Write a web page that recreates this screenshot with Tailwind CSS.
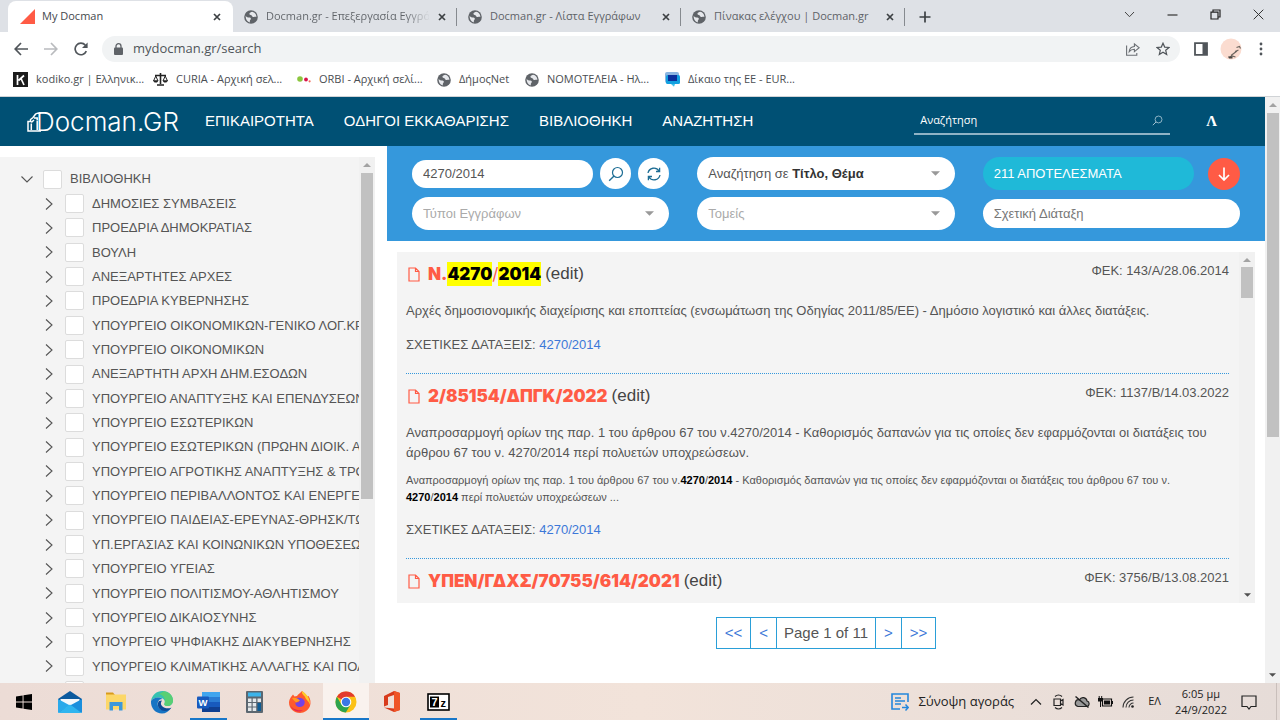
<!DOCTYPE html>
<html lang="el">
<head>
    <meta charset="UTF-8">
    <meta name="viewport" content="width=device-width, initial-scale=1.0">
    <title>My Docman</title>
    <script src="https://cdn.jsdelivr.net/npm/@tailwindcss/browser@4"></script>
</head>
<body class="h-screen flex flex-col overflow-hidden bg-white font-['Liberation_Sans',Arial,sans-serif] text-[#555]">

    <!-- Shared icons -->
    <svg class="hidden">
        <symbol id="globe" viewBox="0 0 14 14">
            <circle cx="7" cy="7" r="6.8" fill="#5f6368"/>
            <path d="M1.7 5.8C2.5 7.4 4 7.6 5.2 7.6 6.6 7.6 7.3 8.6 6.6 9.6 5.8 10.4 5.6 11.4 6 12.4 3.4 12 1.400 9.500 1.700 5.800ZM8.200 1.700C7 2.200 5.600 2.600 5.400 3.800 5.300 4.900 6.600 4.700 7.400 5.200 8.300 5.800 8 6.800 9.200 7 10.600 7.200 11.200 6.600 12.400 7 12.400 4 10.500 2.200 8.200 1.700Z" fill="#e6e8ec"/>
        </symbol>
        <symbol id="close" viewBox="0 0 8 8">
            <path d="M1 1 7 7M7 1 1 7" stroke="#3c4043" stroke-width="1.7" fill="none"/>
        </symbol>
        <symbol id="doc" viewBox="0 0 12 15">
            <path d="M1 1H7.5L11 4.5V14H1ZM7.5 1V4.5H11" stroke="#ff5b45" stroke-width="1.2" fill="none"/>
        </symbol>
        <symbol id="magnifier" viewBox="0 0 16 16">
            <circle cx="9.5" cy="6.5" r="5" stroke="currentColor" stroke-width="1.2" fill="none"/>
            <path d="M6 10 1.2 14.8" stroke="currentColor" stroke-width="1.4"/>
        </symbol>
        <symbol id="down" viewBox="0 0 10 5">
            <path d="M0 0H10L5 5Z" fill="currentColor"/>
        </symbol>
        <symbol id="up" viewBox="0 0 10 5">
            <path d="M0 5H10L5 0Z" fill="currentColor"/>
        </symbol>
    </svg>

    <!-- Browser tabs -->
    <div class="h-8 shrink-0 flex bg-[#dee1e6] pl-2 pt-px font-['Open_Sans','Noto_Sans',sans-serif] text-[11px] text-[#5f6368]">
        <div class="w-[225px] flex items-center bg-white rounded-t-lg pl-3 pr-3">
            <svg class="w-[15px] h-[15px]" viewBox="0 0 15 15"><path d="M15 0V15H0Z" fill="#ff5b45"/></svg>
            <span class="ml-[7px] flex-1 text-[#45494d]">My Docman</span>
            <button aria-label="Close tab"><svg class="w-2 h-2"><use href="#close"/></svg></button>
        </div>
        <div class="w-56 flex items-center pl-[11px]">
            <svg class="w-[14px] h-[14px] shrink-0"><use href="#globe"/></svg>
            <span class="ml-2 w-[164px] overflow-hidden whitespace-nowrap bg-linear-to-r from-[#5f6368] from-85% to-transparent bg-clip-text text-transparent">Docman.gr - Επεξεργασία Εγγράφου</span>
            <button class="ml-2" aria-label="Close tab"><svg class="w-2 h-2"><use href="#close"/></svg></button>
            <span class="ml-auto w-px h-[18px] bg-[#868a8f]"></span>
        </div>
        <div class="w-56 flex items-center pl-[11px]">
            <svg class="w-[14px] h-[14px] shrink-0"><use href="#globe"/></svg>
            <span class="ml-2 w-[164px] overflow-hidden whitespace-nowrap">Docman.gr - Λίστα Εγγράφων</span>
            <button class="ml-2" aria-label="Close tab"><svg class="w-2 h-2"><use href="#close"/></svg></button>
            <span class="ml-auto w-px h-[18px] bg-[#868a8f]"></span>
        </div>
        <div class="w-56 flex items-center pl-[11px]">
            <svg class="w-[14px] h-[14px] shrink-0"><use href="#globe"/></svg>
            <span class="ml-2 w-[164px] overflow-hidden whitespace-nowrap">Πίνακας ελέγχου | Docman.gr</span>
            <button class="ml-2" aria-label="Close tab"><svg class="w-2 h-2"><use href="#close"/></svg></button>
            <span class="ml-auto w-px h-[18px] bg-[#868a8f]"></span>
        </div>
        <button class="ml-[14px]" aria-label="New tab">
            <svg class="w-3 h-3" viewBox="0 0 12 12"><path d="M6 0.5V11.5M0.5 6H11.5" stroke="#3c4043" stroke-width="1.7"/></svg>
        </button>
        <div class="ml-auto flex items-center gap-8 pr-4 pb-[5px]">
            <button aria-label="Tab search"><svg class="w-[11px] h-[11px]" viewBox="0 0 11 11"><path d="M1 3 5.5 7.7 10 3" stroke="#444" fill="none"/></svg></button>
            <button aria-label="Minimize"><svg class="w-[11px] h-[11px]" viewBox="0 0 11 11"><path d="M0.5 6H10.5" stroke="#333" stroke-width="1.2"/></svg></button>
            <button aria-label="Restore"><svg class="w-[11px] h-[11px]" viewBox="0 0 11 11"><path d="M1 3.2H8V10H1ZM3 3V1H10V8H8" stroke="#222" stroke-width="1.2" fill="none"/></svg></button>
            <button aria-label="Close"><svg class="w-[11px] h-[11px]" viewBox="0 0 11 11"><path d="M0.7 0.7 10.3 10.3M10.3 0.7 0.7 10.3" stroke="#333" fill="none"/></svg></button>
        </div>
    </div>

    <!-- Address bar -->
    <div class="h-[34px] shrink-0 flex items-center pl-[14px] pr-3 font-['Open_Sans','Noto_Sans',sans-serif]">
        <button aria-label="Back"><svg class="w-[14px] h-[14px]" viewBox="0 0 14 14"><path d="M14 7H1.5M7 1 1.2 7 7 13" stroke="#50555a" stroke-width="1.7" fill="none"/></svg></button>
        <button class="ml-4" aria-label="Forward"><svg class="w-[14px] h-[14px]" viewBox="0 0 14 14"><path d="M0 7H12.5M7 1 12.8 7 7 13" stroke="#b9bbbe" stroke-width="1.7" fill="none"/></svg></button>
        <button class="ml-4" aria-label="Reload"><svg class="w-[14px] h-[14px]" viewBox="0 0 14 14"><path d="M12.3 9.2A5.8 5.8 0 1 1 11.3 3.1" stroke="#50555a" stroke-width="1.7" fill="none"/><path d="M13.6 0.4V6H8Z" fill="#50555a"/></svg></button>
        <div class="ml-[14px] flex-1 h-[26px] rounded-full bg-[#f1f3f4] flex items-center pl-3 pr-[10px]">
            <svg class="w-[9px] h-3" viewBox="0 0 9 12"><rect y="4.5" width="9" height="7.5" rx="1" fill="#5f6368"/><path d="M2 5V3.2A2.5 2.5 0 0 1 7 3.2V5" stroke="#5f6368" stroke-width="1.3" fill="none"/></svg>
            <label for="address" class="sr-only">Address</label>
            <input id="address" type="text" value="mydocman.gr/search" class="ml-[10px] flex-1 text-[13px] text-[#50555a] bg-transparent outline-none">
            <button aria-label="Share"><svg class="w-[14px] h-[14px]" viewBox="0 0 14 14"><path d="M0.6 3.5V13.2H10.8V11M3.2 9.6C3.5 6.4 5.2 4.7 8.4 4.5V1.8L13.2 5.8 8.4 9.6V7.2C6 7.2 4.5 7.9 3.2 9.6Z" stroke="#6b6f74" stroke-width="1.1" fill="none"/></svg></button>
            <button class="ml-4" aria-label="Bookmark"><svg class="w-[14px] h-[14px]" viewBox="0 0 14 14"><path d="M7 1.2 8.7 5.1 13 5.5 9.7 8.3 10.7 12.6 7 10.3 3.3 12.6 4.3 8.3 1 5.5 5.3 5.1Z" stroke="#50555a" stroke-width="1.2" fill="none"/></svg></button>
        </div>
        <button class="ml-[14px]" aria-label="Side panel"><svg class="w-[14px] h-[14px]" viewBox="0 0 14 14"><path d="M1 1.2H13V12.8H1Z" stroke="#50555a" stroke-width="1.8" fill="none"/><path d="M8.5 1H13V13H8.5Z" fill="#50555a"/></svg></button>
        <button class="ml-3" aria-label="Profile"><svg class="w-[22px] h-[22px]" viewBox="0 0 22 22"><circle cx="11" cy="11" r="10.5" fill="#fbdcd0"/><path d="M9 19.500 12 18 15.500 19M11 17.500 17 13M16.500 9.500 19.500 8.500 20.500 10.500M15 13.500 18.500 12" stroke="#6d655f" stroke-width="1.2" fill="none"/><path d="M8 18.500H12.500V20.500H9Z" fill="#4a4643"/></svg></button>
        <button class="ml-3" aria-label="Menu"><svg class="w-[14px] h-[14px]" viewBox="0 0 14 14"><g fill="#50555a"><circle cx="7" cy="2" r="1.4"/><circle cx="7" cy="7" r="1.4"/><circle cx="7" cy="12" r="1.4"/></g></svg></button>
    </div>

    <!-- Bookmarks -->
    <nav class="h-[31px] shrink-0 flex items-center pl-[13px] pb-[3px] border-b border-[#d0d3d6] font-['Open_Sans','Noto_Sans',sans-serif] text-[11px] text-[#4a4e52] whitespace-nowrap">
        <a href="#" class="w-[140px] flex items-center gap-2">
            <svg class="w-[15px] h-[15px]" viewBox="0 0 15 15"><rect width="15" height="15" fill="#1c1c1c"/><path d="M4.5 3V13M11 3.5 5.5 8.5M8 6.5 11 13" stroke="#fff" stroke-width="1.7" fill="none"/></svg>
            kodiko.gr | Ελληνικ...
        </a>
        <a href="#" class="w-[144px] flex items-center gap-2">
            <svg class="w-[15px] h-[15px]" viewBox="0 0 15 15"><path d="M7.5 1V12M2 3.5H13M4 13H11" stroke="#222" stroke-width="1.6"/><path d="M0.5 9 2.8 4 5 9ZM10 9 12.2 4 14.5 9Z" stroke="#222" fill="none"/><path d="M0.3 8.5H5.3L4 10.5H1.5ZM9.7 8.5H14.7L13.4 10.5H11Z" fill="#222"/></svg>
            CURIA - Αρχική σελ...
        </a>
        <a href="#" class="w-[140px] flex items-center gap-2">
            <svg class="w-[14px] h-[14px]" viewBox="0 0 14 14"><circle cx="3" cy="6" r="2.8" fill="#8cc63f"/><circle cx="9" cy="6.5" r="1.9" fill="#d8124a"/><circle cx="12.6" cy="8.3" r="1.1" fill="#f2705e"/></svg>
            ORBI - Αρχική σελί...
        </a>
        <a href="#" class="w-[88px] flex items-center gap-2">
            <svg class="w-[14px] h-[14px]"><use href="#globe"/></svg>
            ΔήμοςNet
        </a>
        <a href="#" class="w-[140px] flex items-center gap-2">
            <svg class="w-[14px] h-[14px]"><use href="#globe"/></svg>
            ΝΟΜΟΤΕΛΕΙΑ - Ηλ...
        </a>
        <a href="#" class="flex items-center gap-2">
            <svg class="w-[15px] h-[15px]" viewBox="0 0 15 15"><rect width="14" height="11" rx="2" fill="#8bb4e0"/><rect x="1" y="3" width="14" height="9" rx="1.5" fill="#12a0e0"/><rect x="3" y="3" width="9" height="6" fill="#0b2f9c"/><path d="M6 12H10L9 14.8Z" fill="#3fc0ea"/></svg>
            Δίκαιο της ΕΕ - EUR...
        </a>
    </nav>

    <!-- Page viewport -->
    <div class="flex-1 min-h-0 flex">
        <div class="flex-1 min-w-0 flex flex-col">

            <header class="h-[49px] shrink-0 flex items-center bg-[#005074] text-white pl-[27px] pr-12">
                <a href="#" class="flex items-center font-['Inter',sans-serif] text-[26px] font-light" aria-label="Docman.GR">
                    <svg class="w-[14px] h-[20px]" viewBox="0 0 14 20"><path d="M14 18.900H1V9.500H3.500V7.500L6 5.500 8.500 2.200 10.500 1.200H14M4.300 18V11.500M4.300 10.500 7 8M7 6H10.200V8.600M10.200 9V18" stroke="#fff" stroke-width="1.5" fill="none"/></svg>
                    <span class="-ml-[5px]">Docman.GR</span>
                </a>
                <nav class="ml-[26px] flex gap-[30px] text-[15px]">
                    <a href="#">ΕΠΙΚΑΙΡΟΤΗΤΑ</a>
                    <a href="#">ΟΔΗΓΟΙ ΕΚΚΑΘΑΡΙΣΗΣ</a>
                    <a href="#">ΒΙΒΛΙΟΘΗΚΗ</a>
                    <a href="#">ΑΝΑΖΗΤΗΣΗ</a>
                </nav>
                <div class="ml-auto w-64 h-[26px] flex items-center border-b-2 border-[#8fb3c5] pl-[6px] pr-[7px]">
                    <label for="siteSearch" class="sr-only">Αναζήτηση</label>
                    <input id="siteSearch" type="text" placeholder="Αναζήτηση" class="flex-1 bg-transparent outline-none font-['Open_Sans',sans-serif] text-[11px] font-medium placeholder:text-white">
                    <button aria-label="Search"><svg class="w-[11px] h-[11px] text-[#a9c6d4]"><use href="#magnifier"/></svg></button>
                </div>
                <a href="#" class="ml-9 font-['Liberation_Serif',serif] text-[15px] font-bold">Λ</a>
            </header>

            <div class="flex-1 min-h-0 flex">
                <!-- Library tree -->
                <aside class="w-[375px] shrink-0 mt-[11px] flex bg-[#f4f4f4] overflow-hidden">
                    <ul id="tree" class="flex-1 min-w-0 h-[536px] mt-[10px] flex flex-col overflow-hidden text-[13px]"></ul>
                    <div class="w-4 shrink-0 flex flex-col items-center bg-[#f1f1f1]">
                        <svg class="w-2 h-1 mt-[6px] text-[#a3a3a3]"><use href="#up"/></svg>
                        <div class="mt-[6px] w-3 h-[326px] bg-[#c1c1c1]"></div>
                    </div>
                </aside>

                <main class="ml-3 flex-1 min-w-0 flex flex-col">
                    <!-- Filters -->
                    <form class="shrink-0 grid grid-cols-3 auto-rows-[33px] items-center gap-x-7 gap-y-[7px] bg-[#3598dc] py-[11px] px-[25px] text-[13px]">
                        <div class="flex items-center gap-[7px]">
                            <label for="query" class="sr-only">Αναζήτηση</label>
                            <input id="query" type="text" value="4270/2014" class="flex-1 min-w-0 h-7 rounded-full bg-white px-[11px] outline-none">
                            <button type="button" class="w-[31px] h-[31px] rounded-full bg-white flex items-center justify-center text-[#1d6d94]" aria-label="Search">
                                <svg class="w-4 h-4"><use href="#magnifier"/></svg>
                            </button>
                            <button type="button" class="w-[31px] h-[31px] rounded-full bg-white flex items-center justify-center" aria-label="Reset">
                                <svg class="w-[14px] h-[14px]" viewBox="0 0 14 14"><path d="M1 6A6 6 0 0 1 12 4M13 8A6 6 0 0 1 2 10M12.6 0.8V4.5H9M1.4 13.2V9.5H5" stroke="#1d6d94" stroke-width="1.3" fill="none"/></svg>
                            </button>
                        </div>
                        <button type="button" aria-haspopup="listbox" class="h-[33px] rounded-full bg-white flex items-center justify-between pl-[11px] pr-[15px]">
                            <span>Αναζήτηση σε <b class="text-[#333]">Τίτλο, Θέμα</b></span>
                            <svg class="w-[9px] h-[5px] text-[#999]"><use href="#down"/></svg>
                        </button>
                        <div class="flex items-center justify-between">
                            <output class="w-[211px] h-[33px] rounded-full bg-[#1fb9d8] flex items-center pl-[11px] text-white">211 ΑΠΟΤΕΛΕΣΜΑΤΑ</output>
                            <button type="button" class="w-8 h-8 rounded-full bg-[#ff5b45] flex items-center justify-center" aria-label="Download">
                                <svg class="w-3 h-[14px]" viewBox="0 0 12 14"><path d="M6 0.5V13M1 8 6 13 11 8" stroke="#fff" stroke-width="1.7" fill="none"/></svg>
                            </button>
                        </div>
                        <div class="h-[33px] rounded-full bg-white flex items-center pl-[11px] pr-[15px]">
                            <label for="types" class="sr-only">Τύποι Εγγράφων</label>
                            <select id="types" class="flex-1 appearance-none outline-none text-[#aaa]"><option>Τύποι Εγγράφων</option></select>
                            <svg class="w-[9px] h-[5px] text-[#999]"><use href="#down"/></svg>
                        </div>
                        <div class="h-[33px] rounded-full bg-white flex items-center pl-[11px] pr-[15px]">
                            <label for="sectors" class="sr-only">Τομείς</label>
                            <select id="sectors" class="flex-1 appearance-none outline-none text-[#aaa]"><option>Τομείς</option></select>
                            <svg class="w-[9px] h-[5px] text-[#999]"><use href="#down"/></svg>
                        </div>
                        <div class="flex">
                            <label for="provision" class="sr-only">Σχετική Διάταξη</label>
                            <input id="provision" type="text" placeholder="Σχετική Διάταξη" class="flex-1 h-[29px] rounded-full bg-white px-[11px] outline-none placeholder:text-[#777]">
                        </div>
                    </form>

                    <!-- Results -->
                    <section class="mt-[11px] mx-[10px] h-[351px] shrink-0 flex bg-[#f4f4f4] overflow-hidden">
                        <div class="flex-1 min-w-0 pl-[9px] pr-[10px] text-[13px] leading-5">
                            <article class="pt-[10px] pb-[18px] border-b border-dotted border-[#3598dc]">
                                <div class="flex items-start justify-between">
                                    <h2 class="flex items-center text-[17px] leading-6 text-[#444]">
                                        <svg class="w-3 h-[15px] ml-[2px] mr-2"><use href="#doc"/></svg>
                                        <a href="#" class="font-['Inter',sans-serif] font-black text-[#ff5b45]">Ν.<mark class="bg-[#ff0] text-black py-[2px]">4270</mark><span class="font-normal">/</span><mark class="bg-[#ff0] text-black py-[2px]">2014</mark></a>
                                        <a href="#" class="ml-1">(edit)</a>
                                    </h2>
                                    <span class="leading-[18px]">ΦΕΚ: 143/Α/28.06.2014</span>
                                </div>
                                <p class="mt-[15px]">Αρχές δημοσιονομικής διαχείρισης και εποπτείας (ενσωμάτωση της Οδηγίας 2011/85/ΕΕ) - Δημόσιο λογιστικό και άλλες διατάξεις.</p>
                                <p class="mt-[14px]">ΣΧΕΤΙΚΕΣ ΔΑΤΑΞΕΙΣ: <a href="#" class="text-[#3c78d8]">4270/2014</a></p>
                            </article>
                            <article class="pt-[10px] pb-[18px] border-b border-dotted border-[#3598dc]">
                                <div class="flex items-start justify-between">
                                    <h2 class="flex items-center text-[17px] leading-6 text-[#444]">
                                        <svg class="w-3 h-[15px] ml-[2px] mr-2"><use href="#doc"/></svg>
                                        <a href="#" class="font-['Inter',sans-serif] font-black text-[#ff5b45]">2/85154/ΔΠΓΚ/2022</a>
                                        <a href="#" class="ml-1">(edit)</a>
                                    </h2>
                                    <span class="leading-[18px]">ΦΕΚ: 1137/Β/14.03.2022</span>
                                </div>
                                <p class="mt-[15px]">Αναπροσαρμογή ορίων της παρ. 1 του άρθρου 67 του ν.4270/2014 - Καθορισμός δαπανών για τις οποίες δεν εφαρμόζονται οι διατάξεις του άρθρου 67 του ν. 4270/2014 περί πολυετών υποχρεώσεων.</p>
                                <p class="mt-[9px] pr-4 text-[11px] leading-[17px]">Αναπροσαρμογή ορίων της παρ. 1 του άρθρου 67 του ν.<b class="text-black">4270</b>/<b class="text-black">2014</b> - Καθορισμός δαπανών για τις οποίες δεν εφαρμόζονται οι διατάξεις του άρθρου 67 του ν. <span class="whitespace-nowrap"><b class="text-black">4270</b>/<b class="text-black">2014</b></span> περί πολυετών υποχρεώσεων ...</p>
                                <p class="mt-[14px]">ΣΧΕΤΙΚΕΣ ΔΑΤΑΞΕΙΣ: <a href="#" class="text-[#3c78d8]">4270/2014</a></p>
                            </article>
                            <article class="pt-[10px]">
                                <div class="flex items-start justify-between">
                                    <h2 class="flex items-center text-[17px] leading-6 text-[#444]">
                                        <svg class="w-3 h-[15px] ml-[2px] mr-2"><use href="#doc"/></svg>
                                        <a href="#" class="font-['Inter',sans-serif] font-black text-[#ff5b45]">ΥΠΕΝ/ΓΔΧΣ/70755/614/2021</a>
                                        <a href="#" class="ml-1">(edit)</a>
                                    </h2>
                                    <span class="leading-[18px]">ΦΕΚ: 3756/Β/13.08.2021</span>
                                </div>
                            </article>
                        </div>
                        <div class="w-4 shrink-0 flex flex-col items-center bg-[#f1f1f1]">
                            <svg class="w-2 h-1 mt-[6px] text-[#a3a3a3]"><use href="#up"/></svg>
                            <div class="mt-[5px] w-3 h-[31px] bg-[#c1c1c1]"></div>
                            <svg class="w-[7px] h-1 mt-auto mb-[6px] text-[#505050]"><use href="#down"/></svg>
                        </div>
                    </section>

                    <!-- Pagination -->
                    <nav class="mt-[14px] self-center h-8 flex border border-[#2a9fd8] divide-x divide-[#2a9fd8] text-[15px] text-[#3c78d8]">
                        <button class="px-2">&lt;&lt;</button>
                        <button class="px-2">&lt;</button>
                        <span class="px-[7px] leading-[30px] text-[#555]">Page 1 of 11</span>
                        <button class="px-2">&gt;</button>
                        <button class="px-2">&gt;&gt;</button>
                    </nav>
                </main>
            </div>
        </div>

        <!-- Page scrollbar -->
        <div class="w-[15px] shrink-0 flex flex-col items-center bg-[#f1f1f1]">
            <svg class="w-2 h-1 mt-[6px] text-[#a3a3a3]"><use href="#up"/></svg>
            <div class="mt-[6px] w-3 h-[324px] bg-[#c1c1c1]"></div>
            <svg class="w-[7px] h-1 mt-auto mb-[6px] text-[#505050]"><use href="#down"/></svg>
        </div>
    </div>

    <!-- Taskbar -->
    <footer class="h-[37px] shrink-0 flex pl-px bg-linear-to-r from-[#ecdcd6] via-[#f2e3da] to-[#e6dcd8] font-['Open_Sans','Noto_Sans',sans-serif] text-[#222]">
        <button class="w-[46px] flex items-center justify-center" aria-label="Start">
            <svg class="w-4 h-4" viewBox="0 0 16 16"><path d="M0 2.4 6.6 1.4V7.5H0ZM7.5 1.2 16 0V7.5H7.5ZM0 8.4H6.6V14.6L0 13.6ZM7.5 8.4H16V16L7.5 14.8Z" fill="#000"/></svg>
        </button>
        <button class="w-[46px] flex items-center justify-center" aria-label="Mail">
            <svg class="w-6 h-[22px]" viewBox="0 0 24 22"><path d="M0 8 12 0 24 8V21H0Z" fill="#0c5a9e"/><path d="M2.5 8H21.5V14L12 19 2.5 14Z" fill="#f4f8fc"/><path d="M0 8 12 14.5 0 22Z" fill="#2aa9ea"/><path d="M24 8 12 14.5 24 22Z" fill="#1a8fdd"/><path d="M0 22 12 13.5 24 22Z" fill="#2fb5ef"/></svg>
        </button>
        <button class="w-[46px] flex items-center justify-center" aria-label="File Explorer">
            <svg class="w-[22px] h-[19px]" viewBox="0 0 22 19"><path d="M1 0.5H8L10 3H1Z" fill="#d99b1c"/><path d="M1 2.5H21V17.5H1Z" fill="#fcd768"/><path d="M4.5 10H17.5V18.5H14V14H8V18.5H4.5Z" fill="#3b98dc"/></svg>
        </button>
        <button class="w-[46px] flex items-center justify-center" aria-label="Edge">
            <svg class="w-6 h-6" viewBox="0 0 24 24"><path d="M1 11C2 5 6.500 1 12.500 1 19 1 23 6 23 10.500 23 14 20.500 16 17.500 16 15 16 13.800 15 14.500 13.500 16 10.500 13 7.500 9 7.500 5 7.500 2 9 1 11Z" fill="#35c1b1"/><path d="M14 1.200C19.500 2 23 6 23 10.500 23 14 20.500 16 17.500 16 15 16 13.800 15 14.500 13.500 16 10 14 5 9 4Z" fill="#58cf74"/><path d="M1 11C3 7.500 9 6.500 12.500 9 8.500 9 7 12.500 8 16 9.500 20.500 15 22 21 18 19 21.500 15.500 23.500 12 23.500 5.500 23.500 0.500 18 1 11Z" fill="#1674c4"/><path d="M9 11C6 15 9 21 15 21 18 21 20 19.500 21.500 17.500 19 19 14 18.500 12 16 10.500 14.500 10.500 12.500 12 10.500Z" fill="#0c4a96"/></svg>
        </button>
        <button class="w-[46px] flex flex-col items-center" aria-label="Word">
            <svg class="w-[23px] h-5 mt-[9px]" viewBox="0 0 23 20"><path d="M5 0H23V5H5Z" fill="#41a5ee"/><path d="M5 5H23V10H5Z" fill="#2b7cd3"/><path d="M5 10H23V15H5Z" fill="#185abd"/><path d="M5 15H23V20H5Z" fill="#103f91"/><rect y="4.500" width="12" height="12" rx="1" fill="#185abd"/><text x="1.500" y="14" font-size="9.500" font-weight="bold" fill="#fff" font-family="Liberation Sans">W</text></svg>
            <span class="mt-auto w-[37px] h-[2px] bg-[#1877c9]"></span>
        </button>
        <button class="w-[46px] flex items-center justify-center" aria-label="Calculator">
            <svg class="w-[17px] h-[22px]" viewBox="0 0 17 22"><rect width="17" height="22" rx="1" fill="#5c6770"/><rect x="2" y="1.500" width="13" height="4" fill="#3cb4ea"/><g fill="#e4e8ea"><path d="M2 7.500H5.500V11H2ZM6.700 7.500H10.200V11H6.700ZM11.500 7.500H15V11H11.500ZM2 12H5.500V15.500H2ZM6.700 12H10.200V15.500H6.700ZM2 16.500H5.500V20H2ZM6.700 16.500H10.200V20H6.700Z"/></g><path d="M11.500 12H15V20H11.500Z" fill="#0e5c94"/></svg>
        </button>
        <button class="w-[46px] flex items-center justify-center" aria-label="Firefox">
            <svg class="w-[22px] h-[22px]" viewBox="0 0 22 22"><path d="M2 6 4 3.500 5.500 5.500 8 5C9 3 11 2.500 13 0 15 1.500 17 3.500 18 5.500L19.500 5C21.500 8 22 11.500 21 15 19.500 19 15.500 22 11 22 5 22 0 17.500 0 11.500 0 9.500 1 7.500 2 6Z" fill="#ff5a2e"/><path d="M13 0C17 2.500 21.500 7 21 14 20 10 17 9 16 6 15 4 12.500 3.500 13 0Z" fill="#ffca28"/><path d="M0.500 13C3 18 8 20 14 19 10 22 4 21 0.500 13Z" fill="#e5254f"/><path d="M7 8C9 6 14 6.500 15.500 10 16.500 13 14 16 11 16 8 16 6 14 6.500 11.500L10.500 11Z" fill="#7542e5"/><path d="M3 7C6 6 9 7.500 11 9.500L7 11.500C6 10 4 9 3 7Z" fill="#ff9a1f"/></svg>
        </button>
        <button class="w-[46px] flex flex-col items-center bg-[#f9f2ee]" aria-label="Chrome">
            <svg class="w-[22px] h-[22px] mt-2" viewBox="0 0 22 22"><circle cx="11" cy="11" r="10.500" fill="#fbc116"/><path d="M11 11 1.900 5.700A10.500 10.500 0 0 1 20.100 5.700H11Z" fill="#e33b2e"/><path d="M1.900 5.700A10.500 10.500 0 0 0 10.800 21.500L15.600 13.600 11 11 6.400 13.600Z" fill="#2da44e"/><circle cx="11" cy="11" r="5.300" fill="#fff"/><circle cx="11" cy="11" r="4.200" fill="#3b78e7"/></svg>
            <span class="mt-auto w-full h-[2px] bg-[#1877c9]"></span>
        </button>
        <button class="w-[46px] flex items-center justify-center" aria-label="Office">
            <svg class="w-[18px] h-[21px]" viewBox="0 0 18 21"><path d="M1 5 11 0 17 2V19L11 21 1 16.500 11 17.500V4L5 6V14L1 15.500Z" fill="#d83b1c"/><path d="M11 0 17 2V19L11 21Z" fill="#ef5527"/></svg>
        </button>
        <button class="w-[46px] flex flex-col items-center" aria-label="7-Zip">
            <svg class="w-[23px] h-[18px] mt-[10px]" viewBox="0 0 23 18"><rect x="1" y="1" width="21" height="16" fill="#fff" stroke="#000" stroke-width="1.600"/><rect x="3" y="3.500" width="9" height="11" fill="#000"/><text x="4.500" y="13" font-size="11" font-weight="bold" fill="#fff" font-family="Liberation Sans">7</text><text x="13.500" y="14" font-size="11" font-weight="bold" fill="#000" font-family="Liberation Sans">z</text></svg>
            <span class="mt-auto w-[37px] h-[2px] bg-[#1877c9]"></span>
        </button>

        <div class="ml-auto flex items-center pr-[3px]">
            <button class="flex items-center gap-[9px] text-[13px]">
                <svg class="w-[18px] h-[18px]" viewBox="0 0 18 18"><path d="M9 16H1V1H17V9M4 5H10M4 8H14M4 11H10" stroke="#2386dc" stroke-width="1.600" fill="none"/><path d="M11 14.500H17M14.500 11.500 17.300 14.500 14.500 17.500" stroke="#2386dc" stroke-width="1.500" fill="none"/></svg>
                Σύνοψη αγοράς
            </button>
            <button class="ml-4" aria-label="Hidden icons"><svg class="w-3 h-3" viewBox="0 0 12 12"><path d="M1 8.500 6 3.500 11 8.500" stroke="#222" stroke-width="1.200" fill="none"/></svg></button>
            <button class="ml-[10px]" aria-label="Meet now"><svg class="w-[13px] h-4" viewBox="0 0 13 16"><path d="M2 5H8.500V11.500H2ZM8.500 7 11 5.500V11L8.500 9.500M3 2.500Q6.500 -0.500 10 2.500M3 13.500Q6.500 16.500 10 13.500" stroke="#222" stroke-width="1.200" fill="none"/></svg></button>
            <button class="ml-[9px]" aria-label="OneDrive"><svg class="w-4 h-3" viewBox="0 0 16 12"><path d="M4 10.500H12.500A2.800 2.800 0 0 0 13 5 4 4 0 0 0 5.500 3.800 3.400 3.400 0 0 0 4 10.500Z" fill="#999" stroke="#222" stroke-width="1.200"/><path d="M1.500 0.500 14.500 11.500" stroke="#222" stroke-width="1.400"/></svg></button>
            <button class="ml-2" aria-label="Battery"><svg class="w-[15px] h-3" viewBox="0 0 15 12"><path d="M4.500 3H13.500V10H4.500Z" stroke="#111" stroke-width="1.200" fill="none"/><path d="M6 4.500H12V8.500H6ZM13.500 5H15V8H13.500ZM0 2H5V5.500H0Z" fill="#111"/><path d="M1.200 0V3M3.700 0V3M2.500 5V11" stroke="#111"/></svg></button>
            <button class="ml-[9px]" aria-label="Network"><svg class="w-3 h-3" viewBox="0 0 12 12"><path d="M1 11.500A10.500 10.500 0 0 1 11.500 1M4 11.500A7.500 7.500 0 0 1 11.500 4M7 11.500A4.500 4.500 0 0 1 11.500 7" stroke="#333" stroke-width="1.100" fill="none"/><circle cx="10.500" cy="10.500" r="1.300" fill="#222"/></svg></button>
            <span class="ml-[14px] text-[11px]">ΕΛ</span>
            <time class="ml-[14px] text-center text-[11px] leading-4">6:05 μμ<br>24/9/2022</time>
            <button class="ml-[14px]" aria-label="Notifications"><svg class="w-4 h-4" viewBox="0 0 16 16"><path d="M1 2H15V12.500H10L8 15 6 12.500H1Z" stroke="#222" stroke-width="1.200" fill="none"/></svg></button>
            <span class="ml-[19px] w-px h-[37px] bg-[#c9bfbb]"></span>
        </div>
    </footer>

    <script>
        const departments = [
            "ΔΗΜΟΣΙΕΣ ΣΥΜΒΑΣΕΙΣ",
            "ΠΡΟΕΔΡΙΑ ΔΗΜΟΚΡΑΤΙΑΣ",
            "ΒΟΥΛΗ",
            "ΑΝΕΞΑΡΤΗΤΕΣ ΑΡΧΕΣ",
            "ΠΡΟΕΔΡΙΑ ΚΥΒΕΡΝΗΣΗΣ",
            "ΥΠΟΥΡΓΕΙΟ ΟΙΚΟΝΟΜΙΚΩΝ-ΓΕΝΙΚΟ ΛΟΓ.ΚΡΑΤΟΥΣ",
            "ΥΠΟΥΡΓΕΙΟ ΟΙΚΟΝΟΜΙΚΩΝ",
            "ΑΝΕΞΑΡΤΗΤΗ ΑΡΧΗ ΔΗΜ.ΕΣΟΔΩΝ",
            "ΥΠΟΥΡΓΕΙΟ ΑΝΑΠΤΥΞΗΣ ΚΑΙ ΕΠΕΝΔΥΣΕΩΝ",
            "ΥΠΟΥΡΓΕΙΟ ΕΣΩΤΕΡΙΚΩΝ",
            "ΥΠΟΥΡΓΕΙΟ ΕΣΩΤΕΡΙΚΩΝ (ΠΡΩΗΝ ΔΙΟΙΚ. ΑΝΑΣΥΓΚΡ.)",
            "ΥΠΟΥΡΓΕΙΟ ΑΓΡΟΤΙΚΗΣ ΑΝΑΠΤΥΞΗΣ & ΤΡΟΦΙΜΩΝ",
            "ΥΠΟΥΡΓΕΙΟ ΠΕΡΙΒΑΛΛΟΝΤΟΣ ΚΑΙ ΕΝΕΡΓΕΙΑΣ",
            "ΥΠΟΥΡΓΕΙΟ ΠΑΙΔΕΙΑΣ-ΕΡΕΥΝΑΣ-ΘΡΗΣΚ/ΤΩΝ",
            "ΥΠ.ΕΡΓΑΣΙΑΣ ΚΑΙ ΚΟΙΝΩΝΙΚΩΝ ΥΠΟΘΕΣΕΩΝ",
            "ΥΠΟΥΡΓΕΙΟ ΥΓΕΙΑΣ",
            "ΥΠΟΥΡΓΕΙΟ ΠΟΛΙΤΙΣΜΟΥ-ΑΘΛΗΤΙΣΜΟΥ",
            "ΥΠΟΥΡΓΕΙΟ ΔΙΚΑΙΟΣΥΝΗΣ",
            "ΥΠΟΥΡΓΕΙΟ ΨΗΦΙΑΚΗΣ ΔΙΑΚΥΒΕΡΝΗΣΗΣ",
            "ΥΠΟΥΡΓΕΙΟ ΚΛΙΜΑΤΙΚΗΣ ΑΛΛΑΓΗΣ ΚΑΙ ΠΟΛ. ΠΡΟΣΤΑΣΙΑΣ",
            ""
        ];

        function treeRow(name, id, indent, arrow) {
            return `<li class="flex-1 min-h-0 flex items-center whitespace-nowrap ${indent}">
                <svg class="w-3 h-3 shrink-0" viewBox="0 0 12 12"><path d="${arrow}" stroke="#555" stroke-width="1.1" fill="none"/></svg>
                <input type="checkbox" id="${id}" class="ml-[10px] w-[19px] h-[19px] shrink-0 appearance-none bg-white border border-[#dcdcdc] rounded-xs">
                <label for="${id}" class="ml-2">${name}</label>
            </li>`;
        }

        let rows = treeRow("ΒΙΒΛΙΟΘΗΚΗ", "node-root", "pl-[21px]", "M0.500 3.500 6 9 11.500 3.500");
        departments.forEach((name, i) => {
            rows += treeRow(name, "node-" + i, "pl-[43px]", "M3 0.500 9 6 3 11.500");
        });
        document.getElementById("tree").innerHTML = rows;
    </script>
</body>
</html>
